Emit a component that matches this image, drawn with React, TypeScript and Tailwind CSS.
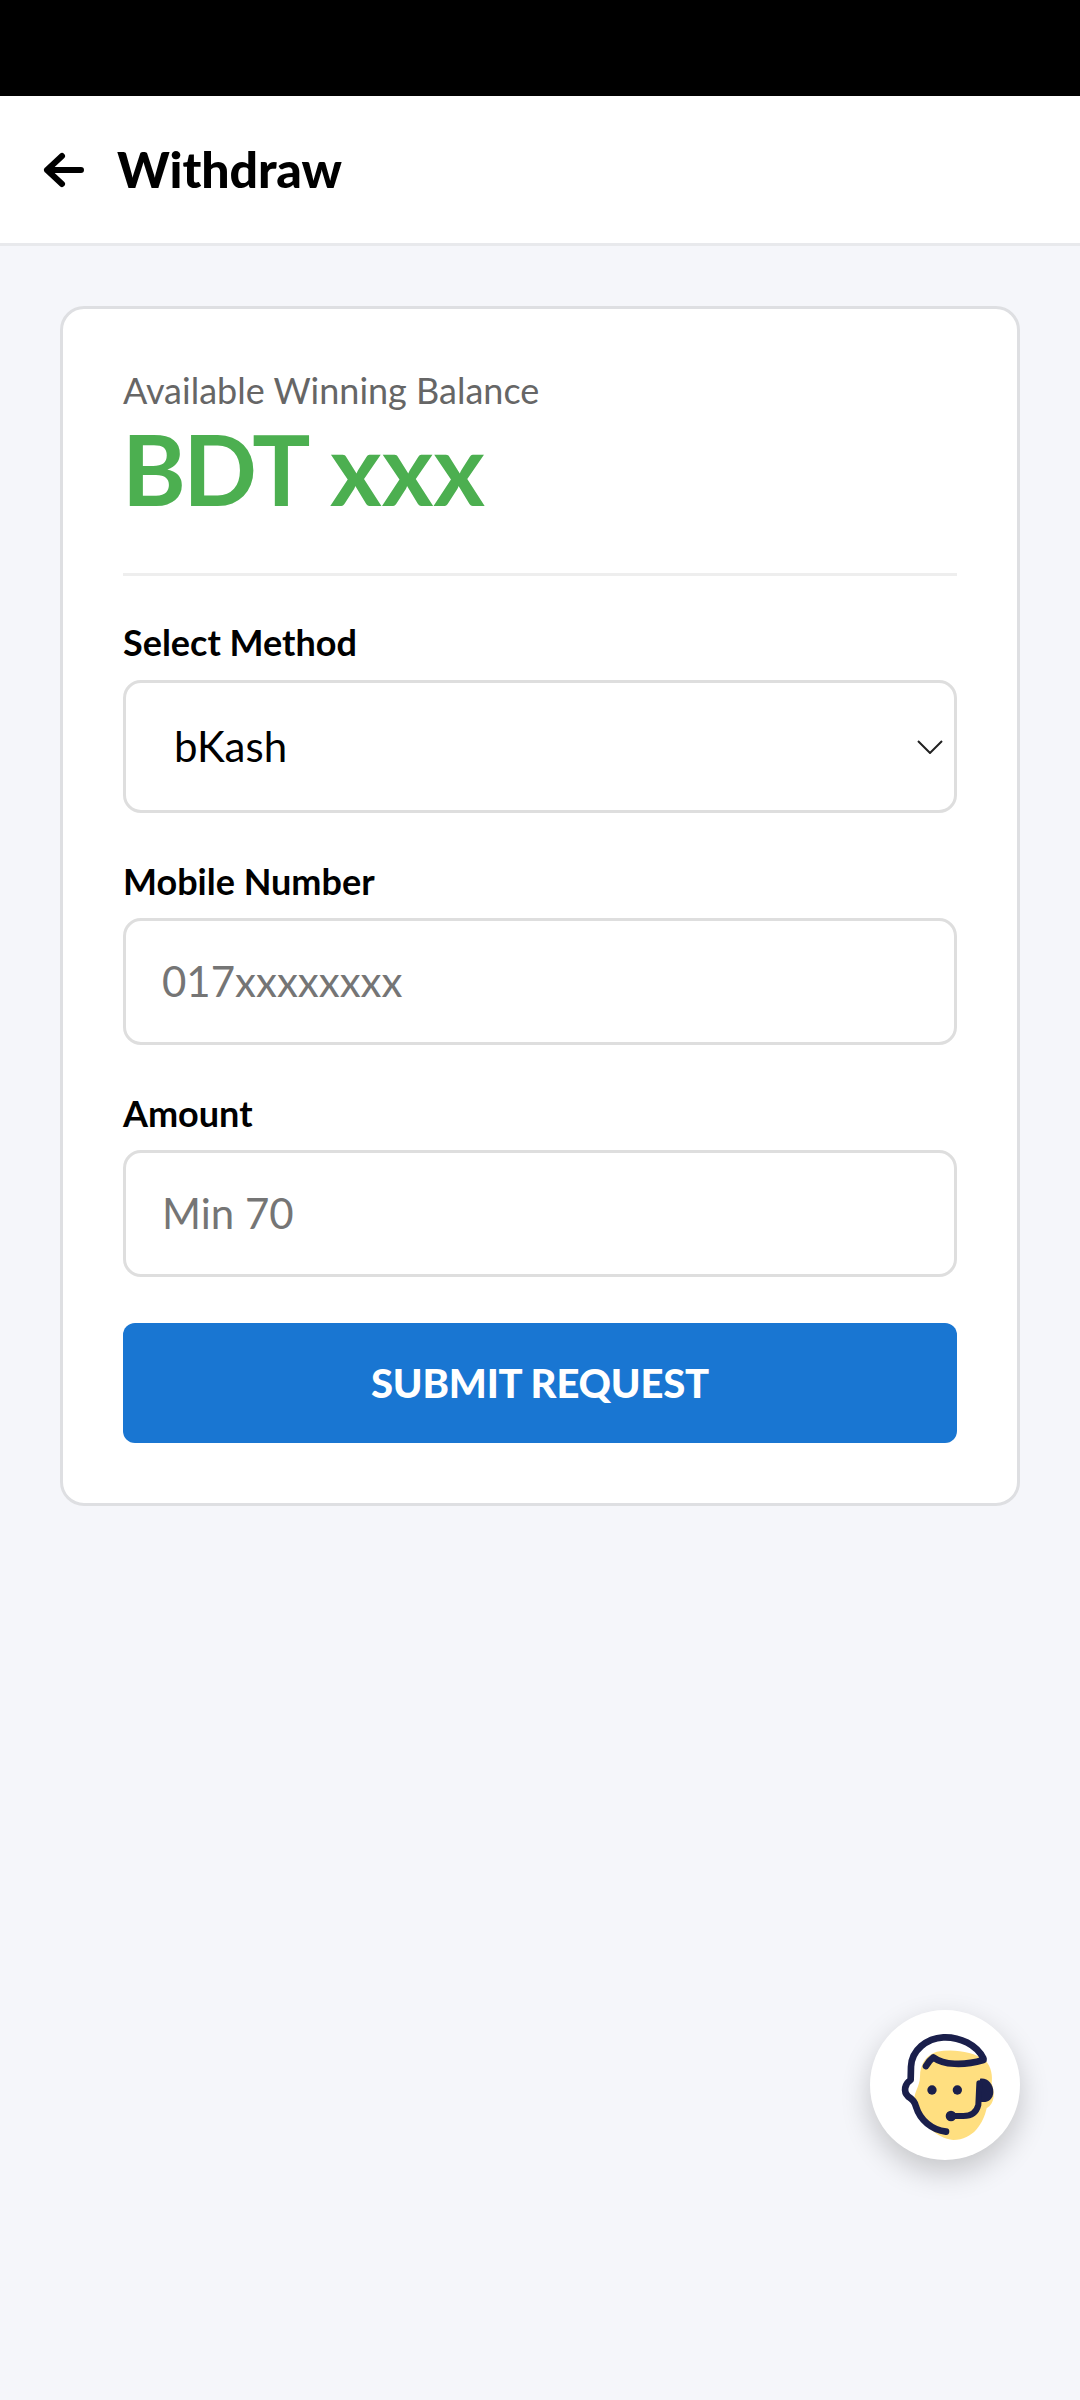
const font = { fontFamily: "Lato, sans-serif" };

function SupportIcon() {
  return (
    <svg viewBox="90 90 450 450" className="w-[150px] h-[150px]" fill="none">
      <path
        d="M290 215C340 205 400 215 435 240C455 260 458 290 455 310C465 340 465 370 440 385C430 430 400 480 340 480C290 475 240 430 225 370C215 345 240 320 240 290C240 250 260 225 290 215Z"
        fill="#FFDF80"
      />
      <path
        d="M430 235C410 195 360 170 310 172C260 175 215 210 213 260L212 300C195 310 188 335 205 350C218 358 225 365 228 380C240 420 275 450 318 455"
        stroke="#1A1F4B"
        strokeWidth="20"
        strokeLinecap="round"
        strokeLinejoin="round"
      />
      <path
        d="M258 258C265 245 272 238 280 232C310 255 370 258 430 240"
        stroke="#1A1F4B"
        strokeWidth="20"
        strokeLinecap="round"
        strokeLinejoin="round"
      />
      <circle cx="220" cy="328" r="8" fill="#FFFFFF" />
      <path
        d="M420 296C442 292 460 312 460 335C460 360 440 370 420 365Z"
        fill="#1A1F4B"
      />
      <path
        d="M418 310L415 375C410 395 395 408 370 408L335 408"
        stroke="#1A1F4B"
        strokeWidth="18"
        strokeLinecap="round"
      />
      <circle cx="333" cy="408" r="16" fill="#1A1F4B" />
      <circle cx="276" cy="330" r="14" fill="#1A1F4B" />
      <circle cx="352" cy="330" r="14" fill="#1A1F4B" />
    </svg>
  );
}

function Field({ label, placeholder, last }: { label: string; placeholder: string; last?: boolean }) {
  return (
    <div className={last ? "mb-[46px]" : "mb-[44px]"}>
      <div className="text-[36px] leading-[48px] font-bold text-black mb-[13px]">{label}</div>
      <div className="h-[127px] flex items-center rounded-[18px] border-[3px] border-[#dedede] bg-white pl-[36px] text-[42px] text-[#757575]">
        {placeholder}
      </div>
    </div>
  );
}

export default function App() {
  return (
    <div className="relative w-[1080px] h-[2400px] bg-[#f5f6fa] overflow-hidden" style={font}>
      <div className="h-[96px] bg-black" />

      {/* Header */}
      <div className="h-[150px] bg-white border-b-[3px] border-[#e8e9ec] flex items-center pl-[42px]">
        <svg viewBox="0 0 48 48" className="w-[48px] h-[48px]" fill="none">
          <path
            d="M39 24H5M20 10L5 24L20 38"
            stroke="#000"
            strokeWidth="6"
            strokeLinecap="round"
            strokeLinejoin="round"
          />
        </svg>
        <span className="ml-[27px] text-[50px] font-black tracking-[-0.1px] text-black">Withdraw</span>
      </div>

      {/* Card */}
      <div className="mx-[60px] mt-[60px] rounded-[24px] border-[3px] border-[#dedfe2] bg-white px-[60px] pt-[57px] pb-[60px]">
        <div className="text-[36px] leading-[48px] text-[#666]">Available Winning Balance</div>
        <div className="text-[97px] leading-[112px] font-bold tracking-[-2.5px] text-[#4caf50] -mt-[1px] -ml-[1px]">
          BDT <span className="ml-[4px] text-[99px] leading-[90px] tracking-[0px]">xxx</span>
        </div>
        <div className="h-[3px] bg-[#eeeeee] mt-[48px] mb-[42px]" />

        <div className="mb-[44px]">
          <div className="text-[36px] leading-[48px] font-bold text-black mb-[14px]">Select Method</div>
          <div className="h-[133px] flex items-center justify-between rounded-[18px] border-[3px] border-[#dedede] bg-white pl-[48px] pr-[11px] text-[42px] text-black">
            <span>bKash</span>
            <svg viewBox="0 0 26 14" className="w-[26px] h-[14px]" fill="none">
              <path d="M1 1L13 13L25 1" stroke="#222" strokeWidth="2" />
            </svg>
          </div>
        </div>

        <Field label="Mobile Number" placeholder="017xxxxxxxx" />
        <Field label="Amount" placeholder="Min 70" last />

        <div className="h-[120px] flex items-center justify-center rounded-[12px] bg-[#1976d2] text-[40px] font-black tracking-[-0.2px] text-white">
          SUBMIT REQUEST
        </div>
      </div>

      {/* Floating support button */}
      <div className="absolute left-[870px] top-[2010px] w-[150px] h-[150px] rounded-full bg-white flex items-center justify-center shadow-[0_12px_30px_rgba(0,0,0,0.2)]">
        <SupportIcon />
      </div>
    </div>
  );
}
